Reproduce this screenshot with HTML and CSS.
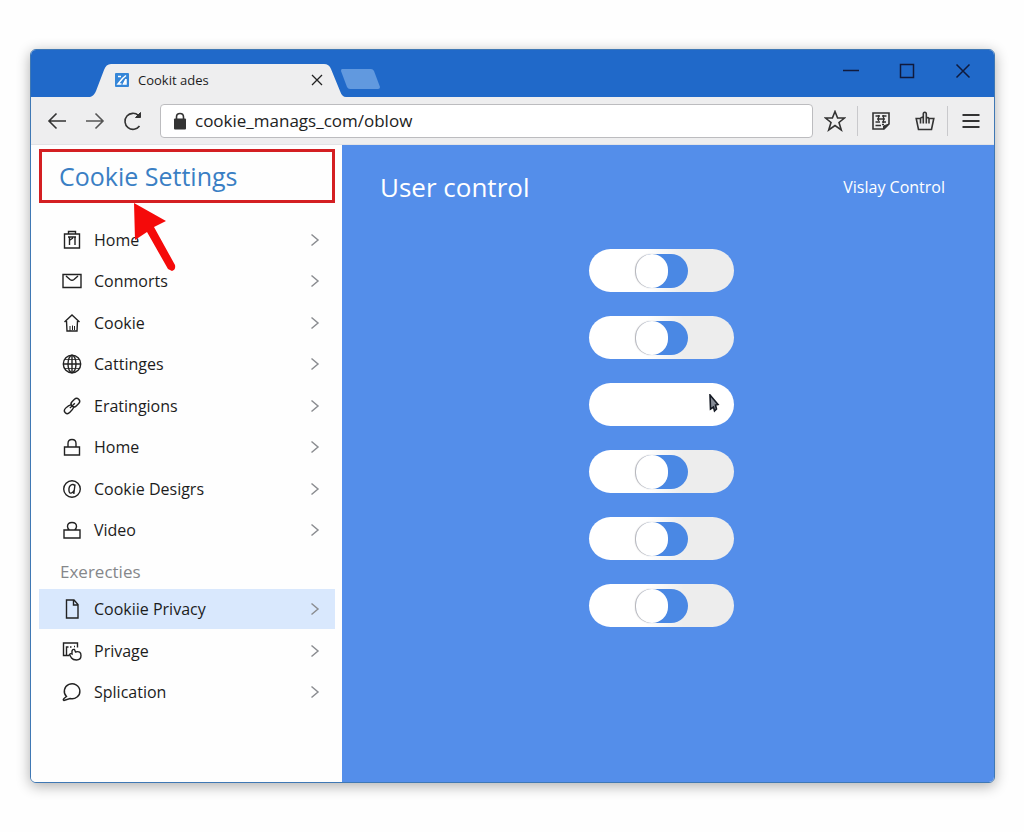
FILE: index.html
```html
<!DOCTYPE html>
<html lang="en">
<head>
<meta charset="utf-8">
<meta name="viewport" content="width=device-width, initial-scale=1">
<title>Cookit ades</title>
<link rel="stylesheet" href="styles.css">
</head>
<body>
<div class="window">
  <header class="titlebar">
    <div class="tab">
      <svg class="tab-shape" viewBox="0 0 256 33" preserveAspectRatio="none" aria-hidden="true"><path d="M0 33Q4 32 6 27L14 6Q16 0 21 0H234Q239 0 241 5L250 27Q252 33 256 33Z"/></svg>
      <svg class="favicon" viewBox="0 0 14 14" aria-hidden="true"><rect width="14" height="14" rx="1" fill="#3586d8"/><path d="M3 3.500H6M11 2.500L7.500 5.500 3 11H6.500M11 6V11H8.500L11 6" fill="none" stroke="#fff" stroke-width="1.500"/></svg>
      <span class="tab-title">Cookit ades</span>
      <button class="tab-close" aria-label="Close tab"><svg width="12" height="12" viewBox="0 0 12 12"><path d="M1 1L11 11M11 1L1 11"/></svg></button>
    </div>
    <button class="new-tab" aria-label="New tab"><svg width="40" height="20" viewBox="0 0 40 20"><path d="M1 0H30Q32 0 33 2L39 18Q39 20 37 20H9Q7 20 6 18L0 2Q0 0 1 0Z"/></svg></button>
    <div class="window-controls">
      <button aria-label="Minimize"><svg width="16" height="16" viewBox="0 0 16 16"><path d="M0 7.500H16"/></svg></button>
      <button aria-label="Maximize"><svg width="16" height="16" viewBox="0 0 16 16"><path d="M1.500 1.500H14.500V14.500H1.500Z"/></svg></button>
      <button aria-label="Close"><svg width="16" height="16" viewBox="0 0 16 16"><path d="M1.500 1.500L14.500 14.500M14.500 1.500L1.500 14.500"/></svg></button>
    </div>
  </header>

  <div class="toolbar">
    <div class="nav">
      <button aria-label="Back"><svg width="20" height="20" viewBox="0 0 20 20"><path d="M19 10H2M9.500 2.500L2 10 9.500 17.500"/></svg></button>
      <button aria-label="Forward" class="dim"><svg width="20" height="20" viewBox="0 0 20 20"><path d="M1 10H18M10.500 2.500L18 10 10.500 17.500"/></svg></button>
      <button aria-label="Reload"><svg width="20" height="20" viewBox="0 0 20 20"><path d="M16.500 15A8 8 0 1 1 15.500 4.500"/><path d="M12.500 6.500H17.500V1.500Z" fill="#333" stroke-width="1"/></svg></button>
    </div>
    <div class="address">
      <svg width="14" height="18" viewBox="0 0 14 18" aria-hidden="true"><rect x="1" y="6.500" width="12" height="11" rx="1" fill="#333"/><path d="M3.500 8V5Q3.500 1.500 7 1.500T10.500 5V8" fill="none" stroke="#333" stroke-width="1.600"/></svg>
      <input type="text" aria-label="Address" value="cookie_manags_com/oblow">
    </div>
    <button class="tool star" aria-label="Bookmark"><svg width="22" height="22" viewBox="0 0 22 22"><path d="M11 1.500L13.600 8H20.500L15 12.500 17.300 20 11 15.600 4.700 20 7 12.500 1.500 8H8.400Z"/></svg></button>
    <button class="tool bordered" aria-label="Reader"><svg width="20" height="20" viewBox="0 0 20 20"><path d="M2 2H18V13L13 18H2Z"/><path d="M4.500 5H9M11 5H15.500M6 8H14M4.500 11H9M11 11H15M4.500 14.500H10M7.500 4V10M12.500 4V12M11 13.500H13" stroke-width="1.300"/><path d="M12.500 18V15L18 13Z" fill="#333" stroke-width="1"/></svg></button>
    <button class="tool" aria-label="Hand tool"><svg width="20" height="20" viewBox="0 0 20 20"><path d="M8.300 12.500V3Q8.300 1.200 9.800 1.200T11.300 3V12.500M8.300 6.500Q5.500 6 5.500 8V12.500M11.300 7Q14 6 14 8V12.500M5.500 7.500H1.200L3.500 18.500H16.500L18.800 7.500H14"/></svg></button>
    <button class="tool bordered" aria-label="Menu"><svg width="20" height="20" viewBox="0 0 20 20"><path d="M1.500 4H18.500M1.500 10H18.500M1.500 16H18.500" stroke-width="2"/></svg></button>
  </div>

  <div class="content">
    <aside class="sidebar">
      <h1 class="heading">Cookie Settings</h1>
      <svg class="pointer" width="46" height="70" viewBox="0 0 46 70" aria-hidden="true"><path d="M2 1L34 19 22 25 43 63Q44 68 40 69L36 67 15 30 3 38Z" fill="#f50a0a"/></svg>
      <nav aria-label="Cookie settings">
        <ul class="menu">
          <li><a href="#"><svg class="icon" viewBox="0 0 20 20"><path d="M2.500 4H17.500V18H2.500ZM6.500 4V1.500H13.500V4M6 7H14M7.500 7V15M8 10L11 8M13 7V15"/></svg><span>Home</span><svg class="chev" viewBox="0 0 10 14"><path d="M1.500 1.500L8 7 1.500 12.500"/></svg></a></li>
          <li><a href="#"><svg class="icon" viewBox="0 0 20 20"><path d="M1 3.500H19V16.500H1ZM4 5L8 8.500Q10 10 12 8.500L16 5"/></svg><span>Conmorts</span><svg class="chev" viewBox="0 0 10 14"><path d="M1.500 1.500L8 7 1.500 12.500"/></svg></a></li>
          <li><a href="#"><svg class="icon" viewBox="0 0 20 20"><path d="M2.500 9L10 2 17.500 9M4.500 8L5 18H15L15.500 8"/><path d="M8 18V13M10.500 17V12.500M12.500 17V13" stroke-width="1"/></svg><span>Cookie</span><svg class="chev" viewBox="0 0 10 14"><path d="M1.500 1.500L8 7 1.500 12.500"/></svg></a></li>
          <li><a href="#"><svg class="icon" viewBox="0 0 20 20"><circle cx="10" cy="10" r="8.700"/><ellipse cx="10" cy="10" rx="4" ry="8.700"/><path d="M1.500 10H18.500M10 1.500V18.500"/><path d="M3 5.500H17M3 14.500H17" stroke-width=".8"/></svg><span>Cattinges</span><svg class="chev" viewBox="0 0 10 14"><path d="M1.500 1.500L8 7 1.500 12.500"/></svg></a></li>
          <li><a href="#"><svg class="icon" viewBox="0 0 20 20"><g transform="rotate(-45 10 10)"><rect x="10" y="7" width="9.500" height="6" rx="3"/><path d="M14 10H7M11 12Q8 13 4 13Q.5 13 .5 10T4 7Q8 7 10.500 8.500"/></g></svg><span>Eratingions</span><svg class="chev" viewBox="0 0 10 14"><path d="M1.500 1.500L8 7 1.500 12.500"/></svg></a></li>
          <li><a href="#"><svg class="icon" viewBox="0 0 20 20"><path d="M2.500 10H17.500V18H2.500ZM6 10V6.500Q6 2.500 10 2.500T14 6.500V10"/></svg><span>Home</span><svg class="chev" viewBox="0 0 10 14"><path d="M1.500 1.500L8 7 1.500 12.500"/></svg></a></li>
          <li><a href="#"><svg class="icon" viewBox="0 0 20 20"><circle cx="10" cy="10" r="8.300"/><path d="M13 5.500L11.800 15M12.800 6.500Q11.500 5 9.800 5.700C7.500 6.700 6.700 9.500 7 12C7.400 15.200 10.500 14.500 12 11.500"/></svg><span>Cookie Desigrs</span><svg class="chev" viewBox="0 0 10 14"><path d="M1.500 1.500L8 7 1.500 12.500"/></svg></a></li>
          <li><a href="#"><svg class="icon" viewBox="0 0 20 20"><path d="M2 10H18V18H2ZM7.500 10Q5.500 8.500 5.500 6.500Q5.500 2.500 10 2.500T14.500 6.500Q14.500 8.500 12.500 10"/></svg><span>Video</span><svg class="chev" viewBox="0 0 10 14"><path d="M1.500 1.500L8 7 1.500 12.500"/></svg></a></li>
        </ul>
        <h2 class="group">Exerecties</h2>
        <ul class="menu short">
          <li><a href="#" class="active" aria-current="page"><svg class="icon" viewBox="0 0 20 20"><path d="M4.500 1H12L16 5.500V19H4.500ZM11.500 1V6H16"/></svg><span>Cookiie Privacy</span><svg class="chev" viewBox="0 0 10 14"><path d="M1.500 1.500L8 7 1.500 12.500"/></svg></a></li>
          <li><a href="#"><svg class="icon" viewBox="0 0 20 20"><path d="M7.500 14.500H1.500V2H15.500V6.500M4.500 14V6H6.500M8 6H9.500M12 5.500H13"/><path d="M9.500 17L7.500 13.500Q8.500 12 10 13V10Q10.500 8 12.500 8.500L13.500 11Q19 9.500 19 14.500Q19 19 14.500 19Q11 19 9.500 17Z"/></svg><span>Privage</span><svg class="chev" viewBox="0 0 10 14"><path d="M1.500 1.500L8 7 1.500 12.500"/></svg></a></li>
          <li><a href="#"><svg class="icon" viewBox="0 0 20 20"><path d="M4.500 14.500A7.800 7.500 0 1 1 8 16.500L2 18.500Q.5 18 2 16.500Z"/></svg><span>Splication</span><svg class="chev" viewBox="0 0 10 14"><path d="M1.500 1.500L8 7 1.500 12.500"/></svg></a></li>
        </ul>
      </nav>
    </aside>

    <main class="panel">
      <div class="panel-head">
        <h2>User control</h2>
        <a href="#">Vislay Control</a>
      </div>
      <div class="switches">
        <label class="pill"><input type="checkbox" role="switch" aria-label="Control 1"></label>
        <label class="pill"><input type="checkbox" role="switch" aria-label="Control 2"></label>
        <button class="pill blank" aria-label="Control 3"><svg class="cursor" width="12" height="20" viewBox="0 0 12 20"><path d="M1 1L9 10.500 6.500 11 7.500 15 5.500 17 4.500 13 1.500 15Z"/></svg></button>
        <label class="pill"><input type="checkbox" role="switch" aria-label="Control 4"></label>
        <label class="pill"><input type="checkbox" role="switch" aria-label="Control 5"></label>
        <label class="pill"><input type="checkbox" role="switch" aria-label="Control 6"></label>
      </div>
    </main>
  </div>
</div>
</body>
</html>
```
FILE: styles.css
```css
* { box-sizing: border-box; }

body {
  margin: 0;
  min-height: 100vh;
  padding: 49px 29px 49px 30px;
  display: flex;
  background: #fefefe;
  color: #1c1c1c;
  font-family: "Open Sans", "Noto Sans", sans-serif;
  font-size: 16px;
}

button {
  display: flex;
  align-items: center;
  justify-content: center;
  padding: 0;
  border: 0;
  background: none;
  cursor: pointer;
}

svg { flex: none; display: block; }

a { color: inherit; text-decoration: none; }

ul { margin: 0; padding: 0; list-style: none; }

.window {
  flex: 1;
  display: flex;
  flex-direction: column;
  border: 1px solid #3f78b4;
  border-radius: 6px;
  background: #fff;
  overflow: hidden;
  box-shadow: 0 3px 14px rgba(0, 0, 0, 0.32);
}

/* Title bar */

.titlebar {
  display: flex;
  align-items: flex-end;
  height: 47px;
  padding-left: 59px;
  background: #2069c9;
}

.tab {
  position: relative;
  display: flex;
  align-items: center;
  width: 256px;
  height: 33px;
  padding: 0 21px 2px 25px;
}

.tab-shape {
  position: absolute;
  inset: 0;
  width: 100%;
  height: 100%;
  fill: #eeeeef;
}

.favicon { position: relative; width: 14px; height: 14px; }

.tab-title {
  position: relative;
  flex: 1;
  padding-left: 9px;
  font-size: 13px;
  white-space: nowrap;
}

.tab-close { position: relative; width: 16px; height: 16px; }
.tab-close svg { fill: none; stroke: #222; stroke-width: 1.3; }

.new-tab { align-self: flex-end; margin: 0 0 8px -5px; }
.new-tab svg { fill: #6199df; }

.window-controls {
  display: flex;
  align-self: flex-start;
  gap: 40px;
  margin-left: auto;
  padding: 13px 23px 0 0;
}

.window-controls svg { fill: none; stroke: #101a3c; stroke-width: 1.5; }

/* Toolbar */

.toolbar {
  display: flex;
  align-items: center;
  height: 48px;
  padding: 0 1px 0 16px;
  background: #eeeeef;
  border-bottom: 1px solid #e2e3e6;
}

.toolbar button svg { fill: none; stroke: #333; stroke-width: 1.6; }

.nav { display: flex; gap: 18px; padding-right: 17px; }
.nav .dim svg { stroke: #555; }

.address {
  flex: 1;
  display: flex;
  align-items: center;
  gap: 8px;
  height: 34px;
  padding: 0 12px;
  border: 1px solid #bcbcbf;
  border-radius: 4px;
  background: #fff;
}

.address input {
  flex: 1;
  min-width: 0;
  padding: 0;
  border: 0;
  outline: 0;
  background: none;
  color: #222;
  font: inherit;
  font-size: 17px;
}

.tool { width: 44px; height: 30px; }
.tool.bordered { width: 46px; border-left: 1px solid #c9c9cc; }

/* Sidebar */

.content { flex: 1; display: flex; }

.sidebar {
  position: relative;
  flex: none;
  width: 311px;
  padding: 4px 7px 0 8px;
  background: #fefefe;
}

.heading {
  margin: 0 0 17px;
  padding: 0 17px;
  border: 3px solid #d41f22;
  color: #3a7fc4;
  font-size: 25px;
  font-weight: 400;
  line-height: 48px;
  white-space: nowrap;
}

.pointer { position: absolute; top: 57px; left: 101px; z-index: 1; }

.menu {
  display: flex;
  flex-direction: column;
  justify-content: space-between;
  min-height: 330px;
}

.menu.short { min-height: 123px; }

.menu a {
  display: flex;
  align-items: center;
  height: 40px;
  padding: 0 15px 0 23px;
}

.menu a.active { background: #d9e8fd; }
.menu span { flex: 1; padding-left: 12px; white-space: nowrap; }

.icon {
  width: 20px;
  height: 20px;
  fill: none;
  stroke: #222;
  stroke-width: 1.4;
}

.chev {
  width: 10px;
  height: 14px;
  fill: none;
  stroke: #8b8d91;
  stroke-width: 1.5;
}

.group {
  margin: 0;
  padding: 4px 21px 0;
  color: #85878a;
  font-size: 17px;
  font-weight: 400;
  line-height: 35px;
}

/* Main panel */

.panel {
  flex: 1;
  padding: 22px 49px 40px 38px;
  background: #548eea;
  color: #fff;
}

.panel-head {
  display: flex;
  align-items: center;
  justify-content: space-between;
}

.panel-head h2 {
  margin: 0;
  font-size: 26px;
  font-weight: 500;
  line-height: 40px;
}

.panel-head a { font-size: 16px; font-weight: 500; }

.switches {
  display: flex;
  flex-direction: column;
  align-items: center;
  gap: 24px;
  padding: 42px 2px 0 0;
}

.pill {
  position: relative;
  display: flex;
  align-items: center;
  justify-content: center;
  width: 145px;
  height: 43px;
  border-radius: 22px;
  background: linear-gradient(90deg, #fff 40%, #ededed 65%);
}

.pill.blank { background: #fff; }

.pill input {
  appearance: none;
  display: flex;
  align-items: center;
  width: 52px;
  height: 34px;
  margin: 0;
  border-radius: 17px;
  background: #4a88e4;
  cursor: pointer;
}

.pill input::before {
  content: "";
  width: 32px;
  height: 34px;
  border-radius: 17px;
  background: #fff;
  box-shadow: -1px 0 1px rgba(80, 80, 90, 0.45);
}

.cursor {
  position: absolute;
  top: 11px;
  right: 13px;
  fill: #858b96;
  stroke: #151a24;
  stroke-width: 1.6;
}
```
